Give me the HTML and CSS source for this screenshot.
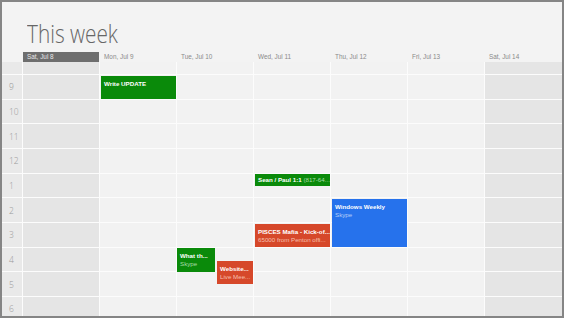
FILE: index.html
```html
<!DOCTYPE html>
<html>
<head>
<meta charset="utf-8">
<link rel="stylesheet" href="styles.css">
</head>
<body>
<div class="frame">
  <h1 class="title">This week</h1>
  <div class="heads">
    <div class="dh today">Sat, Jul 8</div>
    <div class="dh">Mon, Jul 9</div>
    <div class="dh">Tue, Jul 10</div>
    <div class="dh">Wed, Jul 11</div>
    <div class="dh">Thu, Jul 12</div>
    <div class="dh">Fri, Jul 13</div>
    <div class="dh last">Sat, Jul 14</div>
  </div>
  <div class="grid">
    <div class="hours">
      <div class="allday"></div>
      <div class="hr">9</div><div class="hr">10</div><div class="hr">11</div><div class="hr">12</div><div class="hr">1</div>
      <div class="hr">2</div><div class="hr">3</div><div class="hr">4</div><div class="hr">5</div><div class="hr">6</div>
    </div>
    <div class="day weekend">
      <div class="allday"></div>
      <div class="slot"></div><div class="slot"></div><div class="slot"></div><div class="slot"></div><div class="slot"></div>
      <div class="slot"></div><div class="slot"></div><div class="slot"></div><div class="slot"></div><div class="slot"></div>
    </div>
    <div class="day">
      <div class="allday"></div>
      <div class="slot"></div><div class="slot"></div><div class="slot"></div><div class="slot"></div><div class="slot"></div>
      <div class="slot"></div><div class="slot"></div><div class="slot"></div><div class="slot"></div><div class="slot"></div>
      <div class="ev green ev-write"><b>Write UPDATE</b></div>
    </div>
    <div class="day">
      <div class="allday"></div>
      <div class="slot"></div><div class="slot"></div><div class="slot"></div><div class="slot"></div><div class="slot"></div>
      <div class="slot"></div><div class="slot"></div><div class="slot"></div><div class="slot"></div><div class="slot"></div>
      <div class="ev green ev-what"><b>What th...</b><span class="sub">Skype</span></div>
      <div class="ev red ev-web"><b>Website...</b><span class="sub">Live Mee...</span></div>
    </div>
    <div class="day">
      <div class="allday"></div>
      <div class="slot"></div><div class="slot"></div><div class="slot"></div><div class="slot"></div><div class="slot"></div>
      <div class="slot"></div><div class="slot"></div><div class="slot"></div><div class="slot"></div><div class="slot"></div>
      <div class="ev green ev-sean"><b>Sean / Paul 1:1</b> <span class="inl">(817-64...</span></div>
      <div class="ev red ev-pisces"><b>PISCES Mafia - Kick-of...</b><span class="sub">65000 from Penton offi...</span></div>
    </div>
    <div class="day">
      <div class="allday"></div>
      <div class="slot"></div><div class="slot"></div><div class="slot"></div><div class="slot"></div><div class="slot"></div>
      <div class="slot"></div><div class="slot"></div><div class="slot"></div><div class="slot"></div><div class="slot"></div>
      <div class="ev blue ev-ww"><b>Windows Weekly</b><span class="sub">Skype</span></div>
    </div>
    <div class="day">
      <div class="allday"></div>
      <div class="slot"></div><div class="slot"></div><div class="slot"></div><div class="slot"></div><div class="slot"></div>
      <div class="slot"></div><div class="slot"></div><div class="slot"></div><div class="slot"></div><div class="slot"></div>
    </div>
    <div class="day weekend last">
      <div class="allday"></div>
      <div class="slot"></div><div class="slot"></div><div class="slot"></div><div class="slot"></div><div class="slot"></div>
      <div class="slot"></div><div class="slot"></div><div class="slot"></div><div class="slot"></div><div class="slot"></div>
    </div>
  </div>
</div>
</body>
</html>
```

FILE: styles.css
```css
html, body {
  margin: 0;
  padding: 0;
  background: #f3f3f3;
}
.frame {
  box-sizing: border-box;
  width: 564px;
  height: 318px;
  border: 2px solid #858585;
  background: #f3f3f3;
  overflow: hidden;
  font-family: "Liberation Sans", Arial, sans-serif;
}
.title {
  margin: 16px 0 4px 25px;
  height: 30px;
  font-family: "Open Sans", sans-serif;
  font-weight: 300;
  font-size: 26px;
  line-height: 30px;
  color: #666666;
  white-space: nowrap;
  transform: scaleX(0.8);
  transform-origin: 0 0;
}
.heads {
  display: flex;
  gap: 1px;
  height: 10px;
  padding-left: 21px;
}
.dh {
  box-sizing: border-box;
  width: 76px;
  flex: none;
  padding-left: 4px;
  font-size: 6.4px;
  line-height: 10px;
  color: #8a8a8a;
  white-space: nowrap;
}
.dh.last { flex: 1; }
.dh.today {
  background: #6e6e6e;
  color: #e6e6e6;
}
.grid {
  display: flex;
  gap: 1px;
  background: #fcfcfc;
  height: 254px;
}
.hours {
  width: 20px;
  flex: none;
  display: flex;
  flex-direction: column;
  gap: 1px;
}
.hours .allday, .hours .hr { background: #e9e9e9; }
.allday { height: 12px; flex: none; }
.hr {
  height: 23.67px;
  flex: none;
  display: flex;
  align-items: center;
  padding-left: 7px;
  font-family: "Open Sans", sans-serif;
  font-weight: 300;
  font-size: 8.5px;
  color: #9a9a9a;
}
.day {
  position: relative;
  width: 76px;
  flex: none;
  display: flex;
  flex-direction: column;
  gap: 1px;
}
.day.last { flex: 1; }
.day .allday, .day .slot { background: #f2f2f2; }
.day.weekend .allday, .day.weekend .slot { background: #e5e5e5; }
.slot { height: 23.67px; flex: none; }
.ev {
  position: absolute;
  box-sizing: border-box;
  padding: 4px 3px 0;
  font-size: 6.2px;
  line-height: 8px;
  color: #fff;
  overflow: hidden;
  white-space: nowrap;
}
.ev b { font-weight: bold; display: inline; }
.ev .sub { display: block; font-weight: normal; }
.green { background: #0a8a0a; }
.green .sub, .green .inl { color: #a9dca9; }
.red { background: #d6482a; }
.red .sub { color: #f6c0b0; }
.blue { background: #2672ec; }
.blue .sub { color: #b7d0f8; }
.ev-write { top: 14px; height: 23px; left: 1px; right: 0; }
.ev-sean { top: 112px; height: 12px; left: 1px; right: 0; padding-top: 2px; }
.ev-pisces { top: 162px; height: 23px; left: 1px; right: 0; }
.ev-ww { top: 137px; height: 48px; left: 1px; right: 0; }
.ev-what { top: 186px; height: 24px; left: 0; width: 38px; }
.ev-web { top: 199px; height: 23px; left: 40px; right: 0; }
```
